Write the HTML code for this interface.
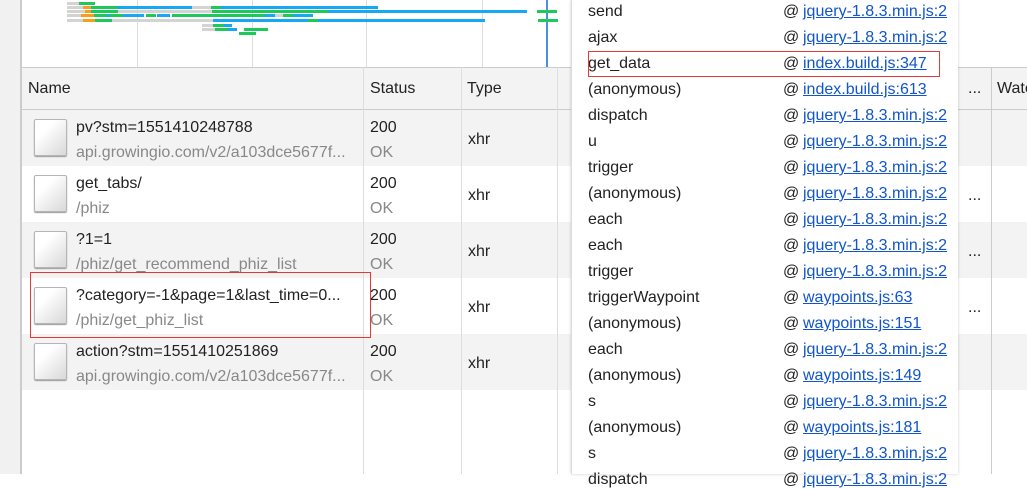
<!DOCTYPE html>
<html><head><meta charset="utf-8"><style>
*{margin:0;padding:0;box-sizing:border-box}
body{width:1027px;height:474px;overflow:hidden;background:#fff;font-family:"Liberation Sans",Arial,sans-serif;font-size:16px;color:#222;position:relative}
.a{position:absolute}
.bar{position:absolute;height:3px}
.g{background:#1ec95a}.b{background:#16a8f2}.o{background:#f99d1c}.y{background:#d3d3d3}
.vl{position:absolute;width:1px;background:#ddd}
.row{position:absolute;left:22px;width:1005px;height:56px}
.ic{position:absolute;left:12px;top:9px;width:33px;height:37px;border:1px solid #b5b5b5;border-radius:2px;background:linear-gradient(135deg,#fff 30%,#d8d8d8);box-shadow:0 1px 1px #999}
.t1{position:absolute;left:54px;top:9px;white-space:nowrap}
.t2{position:absolute;left:54px;top:34px;color:#888;white-space:nowrap}
.st1{position:absolute;left:348px;top:9px}.st2{position:absolute;left:348px;top:34px;color:#888}
.ty{position:absolute;left:446px;top:21px}
.pl{position:absolute;left:588px}
.at{position:absolute;left:783px}
.lk{position:absolute;left:803px;color:#1155cc;text-decoration:underline}
</style></head><body>
<div class="a" style="left:0;top:0;width:22px;height:474px;background:#f1f1f1;border-right:2px solid #ccc"></div>
<div class="vl" style="left:137px;top:0;height:67px"></div>
<div class="vl" style="left:252px;top:0;height:67px"></div>
<div class="vl" style="left:366px;top:0;height:67px"></div>
<div class="vl" style="left:482px;top:0;height:67px"></div>
<div class="a" style="left:546px;top:0;width:2px;height:67px;background:#4a90e2"></div>
<div class="bar y" style="left:67px;top:2px;width:12px"></div><div class="bar g" style="left:79px;top:2px;width:16px"></div>
<div class="bar y" style="left:67px;top:6px;width:16px"></div><div class="bar o" style="left:83px;top:6px;width:8px"></div><div class="bar g" style="left:91px;top:6px;width:26px"></div><div class="bar b" style="left:117px;top:6px;width:75px"></div><div class="bar y" style="left:192px;top:6px;width:19px"></div><div class="bar g" style="left:211px;top:6px;width:10px"></div><div class="bar b" style="left:221px;top:6px;width:157px"></div>
<div class="bar y" style="left:67px;top:10px;width:18px"></div><div class="bar o" style="left:85px;top:10px;width:6px"></div><div class="bar g" style="left:91px;top:10px;width:27px"></div><div class="bar y" style="left:118px;top:10px;width:94px"></div><div class="bar g" style="left:212px;top:10px;width:116px"></div><div class="bar b" style="left:328px;top:10px;width:199px"></div><div class="bar g" style="left:537px;top:10px;width:20px"></div>
<div class="bar y" style="left:67px;top:14px;width:14px"></div><div class="bar o" style="left:81px;top:14px;width:13px"></div><div class="bar g" style="left:94px;top:14px;width:13px"></div><div class="bar b" style="left:107px;top:14px;width:3px"></div><div class="bar g" style="left:110px;top:14px;width:13px"></div><div class="bar b" style="left:123px;top:14px;width:21px"></div><div class="bar g" style="left:146px;top:14px;width:10px"></div><div class="bar b" style="left:157px;top:14px;width:13px"></div><div class="bar g" style="left:172px;top:14px;width:93px"></div><div class="bar b" style="left:265px;top:14px;width:10px"></div><div class="bar y" style="left:275px;top:14px;width:8px"></div><div class="bar g" style="left:283px;top:14px;width:10px"></div><div class="bar b" style="left:293px;top:14px;width:20px"></div>
<div class="bar y" style="left:67px;top:19px;width:16px"></div><div class="bar o" style="left:83px;top:19px;width:12px"></div><div class="bar g" style="left:95px;top:19px;width:17px"></div><div class="bar y" style="left:112px;top:19px;width:101px"></div><div class="bar b" style="left:213px;top:19px;width:95px"></div><div class="bar g" style="left:308px;top:19px;width:10px"></div><div class="bar b" style="left:318px;top:19px;width:167px"></div><div class="bar g" style="left:538px;top:19px;width:20px"></div>
<div class="bar y" style="left:202px;top:24px;width:11px"></div><div class="bar g" style="left:213px;top:24px;width:11px"></div><div class="bar b" style="left:224px;top:24px;width:8px"></div>
<div class="bar y" style="left:202px;top:28px;width:13px"></div><div class="bar g" style="left:215px;top:28px;width:13px"></div><div class="bar b" style="left:228px;top:28px;width:9px"></div><div class="bar g" style="left:244px;top:28px;width:24px"></div>
<div class="bar g" style="left:239px;top:32px;width:17px"></div>
<div class="a" style="left:22px;top:67px;width:1005px;height:43px;background:#f3f3f3;border-top:1px solid #ccc;border-bottom:1px solid #ccc"></div>
<div class="a" style="left:28px;top:80px">Name</div>
<div class="a" style="left:370px;top:80px">Status</div>
<div class="a" style="left:467px;top:80px">Type</div>
<div class="a" style="left:997px;top:80px">Water</div>
<div class="a" style="left:968px;top:80px">...</div>
<div class="row" style="top:110px;background:#f3f3f3"><div class="ic"></div><div class="t1">pv?stm=1551410248788</div><div class="t2">api.growingio.com/v2/a103dce5677f...</div><div class="st1">200</div><div class="st2">OK</div><div class="ty">xhr</div></div>
<div class="row" style="top:166px;background:#fff"><div class="ic"></div><div class="t1">get_tabs/</div><div class="t2">/phiz</div><div class="st1">200</div><div class="st2">OK</div><div class="ty">xhr</div></div>
<div class="row" style="top:222px;background:#f3f3f3"><div class="ic"></div><div class="t1">?1=1</div><div class="t2">/phiz/get_recommend_phiz_list</div><div class="st1">200</div><div class="st2">OK</div><div class="ty">xhr</div></div>
<div class="row" style="top:278px;background:#fff"><div class="ic"></div><div class="t1">?category=-1&amp;page=1&amp;last_time=0...</div><div class="t2">/phiz/get_phiz_list</div><div class="st1">200</div><div class="st2">OK</div><div class="ty">xhr</div></div>
<div class="row" style="top:334px;background:#f3f3f3"><div class="ic"></div><div class="t1">action?stm=1551410251869</div><div class="t2">api.growingio.com/v2/a103dce5677f...</div><div class="st1">200</div><div class="st2">OK</div><div class="ty">xhr</div></div>
<div class="vl" style="left:363px;top:67px;height:407px"></div>
<div class="vl" style="left:461px;top:67px;height:407px"></div>
<div class="vl" style="left:557px;top:67px;height:407px"></div>
<div class="vl" style="left:991px;top:67px;height:407px;background:#ccc"></div>
<div class="a" style="left:968px;top:187px">...</div>
<div class="a" style="left:968px;top:243px">...</div>
<div class="a" style="left:968px;top:299px">...</div>
<div class="a" style="left:30px;top:272px;width:341px;height:66px;border:1px solid #e53935"></div>
<div class="a" style="left:571px;top:0;width:387px;height:474px;background:#fff;border-left:1px solid #ddd;box-shadow:0 0 3px rgba(0,0,0,.2)"></div>
<div class="pl" style="top:3px">send</div><div class="at" style="top:3px">@</div><div class="lk" style="top:3px">jquery-1.8.3.min.js:2</div>
<div class="pl" style="top:29px">ajax</div><div class="at" style="top:29px">@</div><div class="lk" style="top:29px">jquery-1.8.3.min.js:2</div>
<div class="pl" style="top:55px">get_data</div><div class="at" style="top:55px">@</div><div class="lk" style="top:55px">index.build.js:347</div>
<div class="pl" style="top:81px">(anonymous)</div><div class="at" style="top:81px">@</div><div class="lk" style="top:81px">index.build.js:613</div>
<div class="pl" style="top:107px">dispatch</div><div class="at" style="top:107px">@</div><div class="lk" style="top:107px">jquery-1.8.3.min.js:2</div>
<div class="pl" style="top:133px">u</div><div class="at" style="top:133px">@</div><div class="lk" style="top:133px">jquery-1.8.3.min.js:2</div>
<div class="pl" style="top:159px">trigger</div><div class="at" style="top:159px">@</div><div class="lk" style="top:159px">jquery-1.8.3.min.js:2</div>
<div class="pl" style="top:185px">(anonymous)</div><div class="at" style="top:185px">@</div><div class="lk" style="top:185px">jquery-1.8.3.min.js:2</div>
<div class="pl" style="top:211px">each</div><div class="at" style="top:211px">@</div><div class="lk" style="top:211px">jquery-1.8.3.min.js:2</div>
<div class="pl" style="top:237px">each</div><div class="at" style="top:237px">@</div><div class="lk" style="top:237px">jquery-1.8.3.min.js:2</div>
<div class="pl" style="top:263px">trigger</div><div class="at" style="top:263px">@</div><div class="lk" style="top:263px">jquery-1.8.3.min.js:2</div>
<div class="pl" style="top:289px">triggerWaypoint</div><div class="at" style="top:289px">@</div><div class="lk" style="top:289px">waypoints.js:63</div>
<div class="pl" style="top:315px">(anonymous)</div><div class="at" style="top:315px">@</div><div class="lk" style="top:315px">waypoints.js:151</div>
<div class="pl" style="top:341px">each</div><div class="at" style="top:341px">@</div><div class="lk" style="top:341px">jquery-1.8.3.min.js:2</div>
<div class="pl" style="top:367px">(anonymous)</div><div class="at" style="top:367px">@</div><div class="lk" style="top:367px">waypoints.js:149</div>
<div class="pl" style="top:393px">s</div><div class="at" style="top:393px">@</div><div class="lk" style="top:393px">jquery-1.8.3.min.js:2</div>
<div class="pl" style="top:419px">(anonymous)</div><div class="at" style="top:419px">@</div><div class="lk" style="top:419px">waypoints.js:181</div>
<div class="pl" style="top:445px">s</div><div class="at" style="top:445px">@</div><div class="lk" style="top:445px">jquery-1.8.3.min.js:2</div>
<div class="pl" style="top:471px">dispatch</div><div class="at" style="top:471px">@</div><div class="lk" style="top:471px">jquery-1.8.3.min.js:2</div>
<div class="a" style="left:588px;top:51px;width:352px;height:26px;border:1px solid #e53935"></div>
</body></html>
